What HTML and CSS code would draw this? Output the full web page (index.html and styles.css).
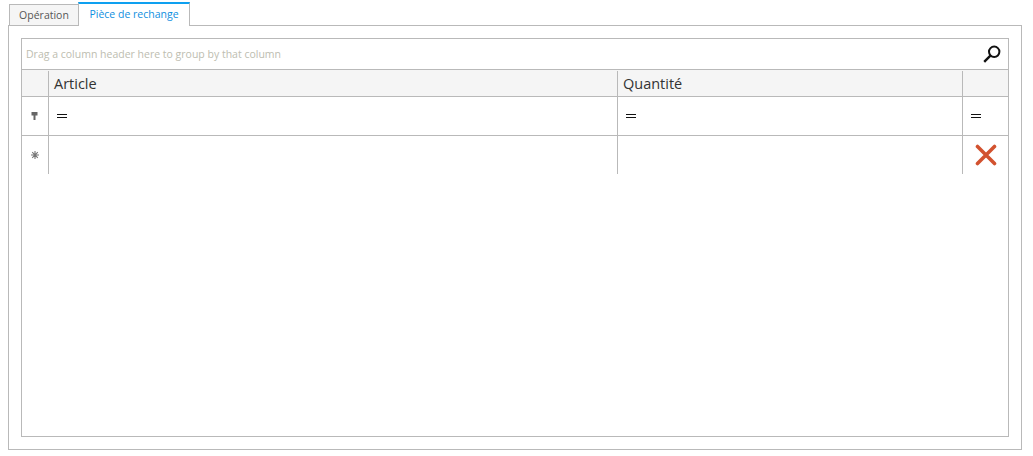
FILE: index.html
```html
<!DOCTYPE html>
<html lang="fr">
<head>
<meta charset="utf-8">
<title>Pièce de rechange</title>
<link rel="stylesheet" href="styles.css">
</head>
<body>
<div class="tabs">
  <div class="tab">Opération</div>
  <div class="tab active">Pièce de rechange</div>
</div>
<div class="panel">
  <div class="grid">
    <div class="group">
      <span class="hint">Drag a column header here to group by that column</span>
      <svg class="search" width="20" height="20" viewBox="0 0 20 20"><circle cx="12.2" cy="7.8" r="5.2" fill="none" stroke="#111" stroke-width="2"/><path d="M8.4 11.6 2.2 17.8" stroke="#111" stroke-width="2.4" fill="none"/></svg>
    </div>
    <div class="row head">
      <div class="cell ind"></div>
      <div class="cell title">Article</div>
      <div class="cell title">Quantité</div>
      <div class="cell last"></div>
    </div>
    <div class="row filter">
      <div class="cell ind">
        <svg width="7" height="8" viewBox="0 0 7 8"><path d="M.5 0h6v3.5h-2V8h-2V3.5h-2z" fill="#666"/></svg>
      </div>
      <div class="cell"><span class="eq"></span></div>
      <div class="cell"><span class="eq"></span></div>
      <div class="cell last"><span class="eq"></span></div>
    </div>
    <div class="row fresh">
      <div class="cell ind">
        <svg width="8" height="8" viewBox="0 0 8 8"><path d="M4 0v8M0 4h8M1.2 1.2l5.6 5.6M6.8 1.2 1.2 6.8" stroke="#777" stroke-width="1.1" fill="none"/></svg>
      </div>
      <div class="cell"></div>
      <div class="cell"></div>
      <div class="cell last del">
        <svg width="22" height="22" viewBox="0 0 22 22"><path d="M2.5 2.5l17 17M19.5 2.5l-17 17" stroke="#d2522f" stroke-width="3.6" stroke-linecap="round" fill="none"/></svg>
      </div>
    </div>
  </div>
</div>
</body>
</html>
```
FILE: styles.css
```css
* { box-sizing: border-box; }
html, body { margin: 0; height: 100%; background: #fff; }
body {
  width: 1033px;
  height: 456px;
  overflow: hidden;
  padding: 1px 11px 6px 8px;
  display: flex;
  flex-direction: column;
  font-family: "Open Sans", "Noto Sans", sans-serif;
}
.tabs {
  display: flex;
  align-items: flex-end;
  height: 24px;
  padding-left: 1px;
  flex: none;
}
.tab {
  height: 21px;
  width: 69px;
  background: #f5f5f5;
  border: 1px solid #b9b9b9;
  border-bottom: 0;
  border-right: 0;
  font-size: 10.5px;
  color: #555;
  text-align: center;
  line-height: 20px;
}
.tab.active {
  height: 24px;
  width: 112px;
  margin-bottom: -1px;
  background: #fff;
  color: #0f8fe0;
  border: 1px solid #b9b9b9;
  border-top: 2px solid #0ea0f0;
  border-bottom: 0;
  line-height: 21px;
  position: relative;
  z-index: 1;
}
.panel {
  flex: 1;
  border: 1px solid #b9b9b9;
  padding: 12px 12px 12px 12px;
  display: flex;
}
.grid {
  flex: 1;
  border: 1px solid #b9b9b9;
}
.group {
  height: 31px;
  padding: 0 4px 0 4px;
  display: flex;
  align-items: center;
  justify-content: space-between;
  border-bottom: 1px solid #b9b9b9;
}
.hint {
  font-size: 10.5px;
  color: #bdbdb0;
}
.search { margin-right: 2px; margin-top: -1px; }
.row {
  display: grid;
  grid-template-columns: 27px 569px 345px 1fr;
}
.cell {
  border-right: 1px solid #b9b9b9;
  display: flex;
  align-items: center;
}
.cell.last { border-right: 0; }
.ind { justify-content: center; padding-right: 1px; }
.head {
  height: 27px;
  background: #f5f5f5;
  border-bottom: 1px solid #b9b9b9;
  padding-top: 1px;
}
.title {
  font-size: 14.5px;
  color: #333;
  padding-left: 5px;
}
.filter {
  height: 39px;
  border-bottom: 1px solid #b9b9b9;
}
.fresh { height: 38px; }
.eq {
  display: block;
  width: 10px;
  height: 4px;
  margin-left: 8px;
  border-top: 1px solid #111;
  border-bottom: 1px solid #111;
}
.del { justify-content: center; }
```
